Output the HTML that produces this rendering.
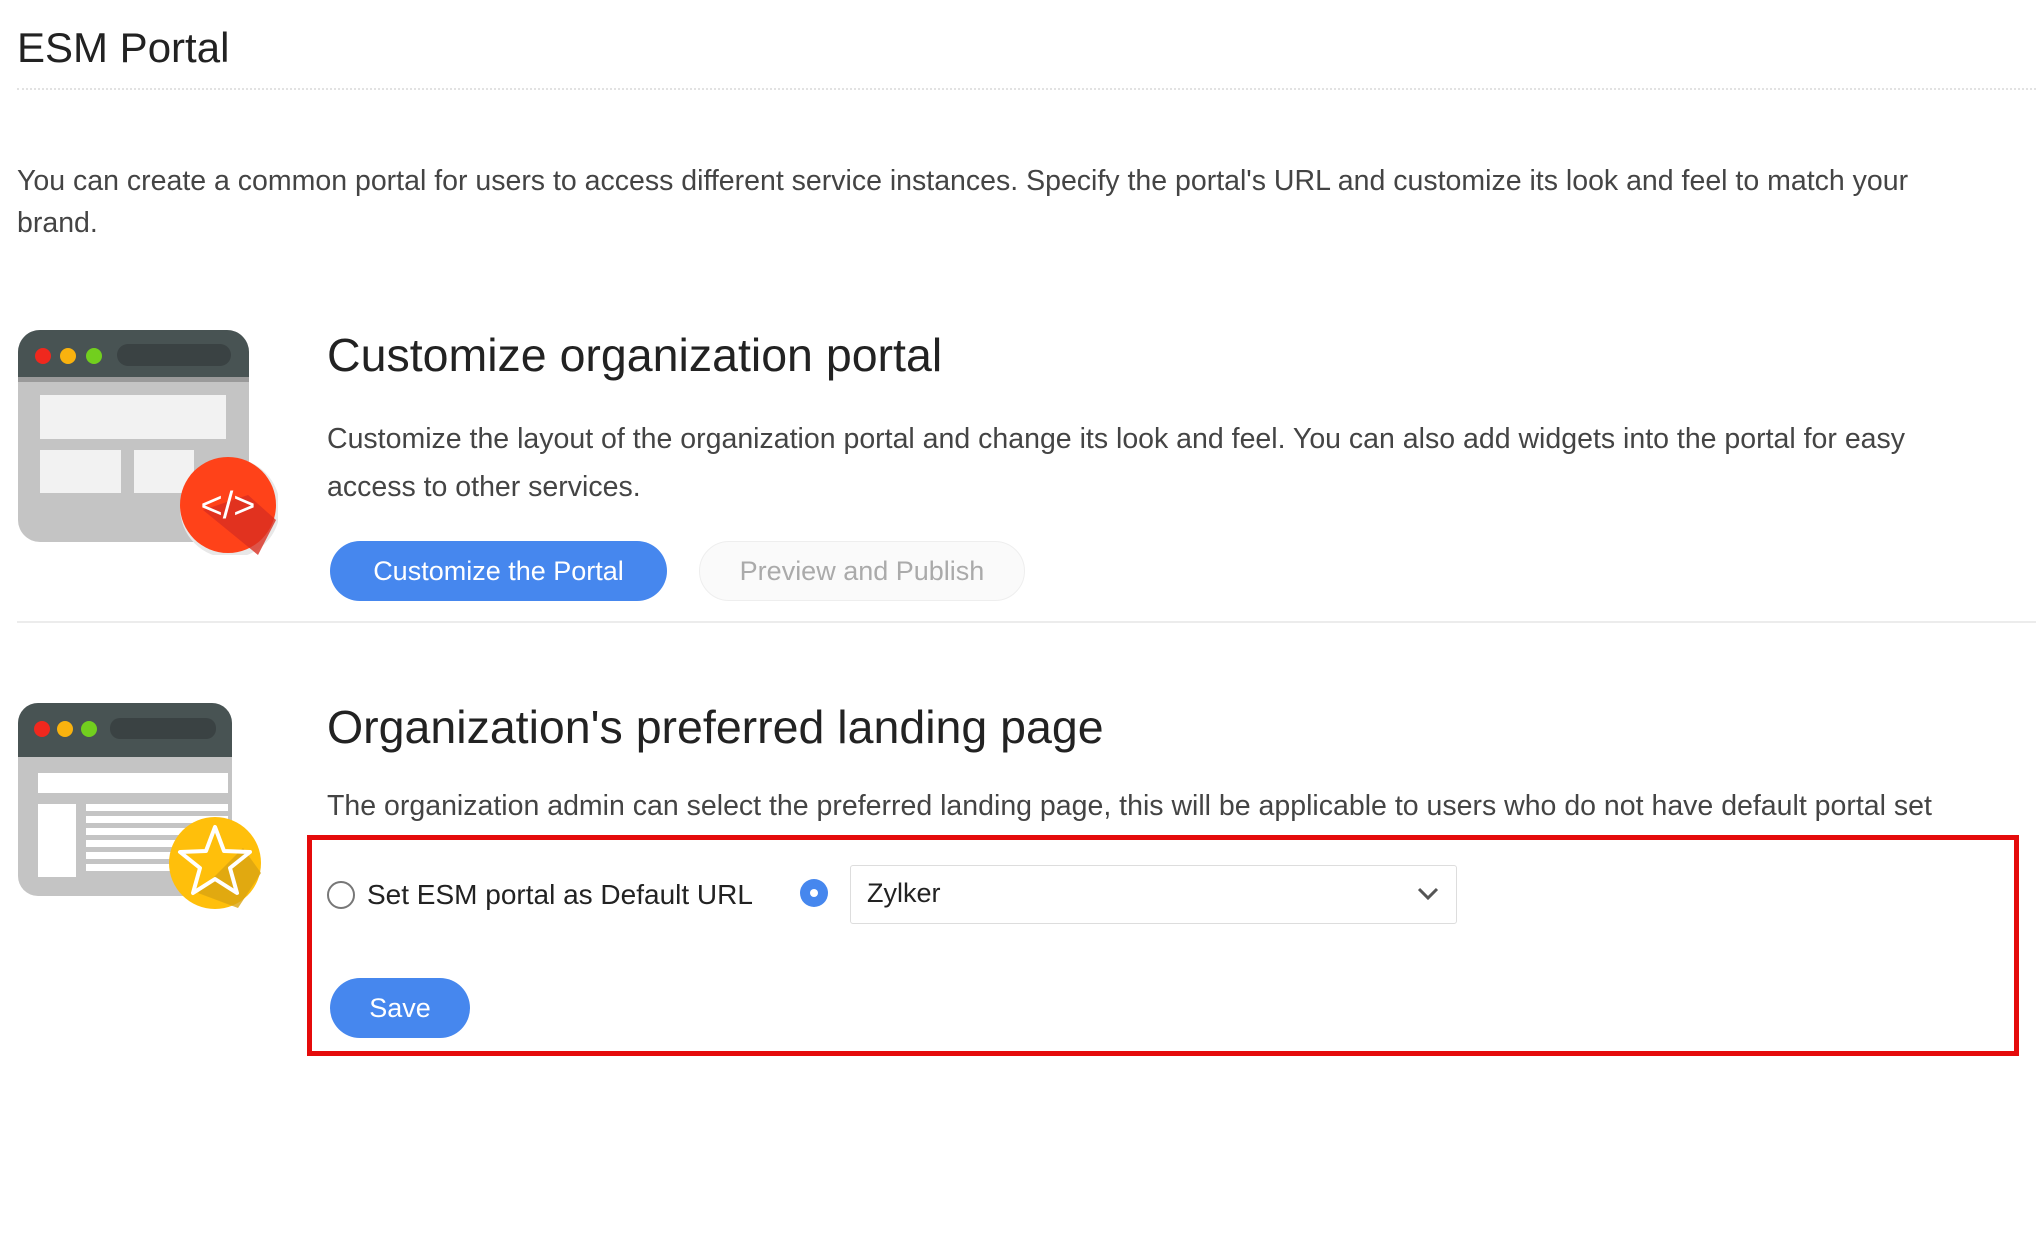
<!DOCTYPE html>
<html><head><meta charset="utf-8"><style>
body{margin:0;width:2040px;height:1244px;background:#fff;font-family:"Liberation Sans",sans-serif;color:#333;position:relative;overflow:hidden}
.a{position:absolute;white-space:nowrap}
.btn{position:absolute;border-radius:30px;font-size:27px;text-align:center}
</style></head><body>
<div class="a" style="left:17px;top:24px;font-size:42px;color:#222">ESM Portal</div>
<div class="a" style="left:17px;top:88px;width:2019px;border-top:2px dotted #e2e2e2"></div>
<div class="a" style="left:17px;top:160px;font-size:28.5px;line-height:42px;color:#444;white-space:normal;width:1950px">You can create a common portal for users to access different service instances. Specify the portal's URL and customize its look and feel to match your brand.</div>

<svg class="a" style="left:18px;top:330px" width="260" height="225" viewBox="0 0 260 225">
<rect x="0" y="0" width="231" height="212" rx="22" fill="#c4c4c4"/>
<path d="M0 22a22 22 0 0 1 22-22h187a22 22 0 0 1 22 22v28h-231z" fill="#485353"/>
<rect x="0" y="47" width="231" height="5" fill="#9a9a9a"/>
<circle cx="25" cy="26" r="8" fill="#f0281e"/><circle cx="50" cy="26" r="8" fill="#f9b20e"/><circle cx="76" cy="26" r="8" fill="#72cf1e"/>
<rect x="99" y="14" width="114" height="22" rx="11" fill="#3a4243"/>
<rect x="22" y="65" width="186" height="44" fill="#f2f2f2"/>
<rect x="22" y="120" width="81" height="43" fill="#f2f2f2"/>
<rect x="116" y="120" width="60" height="43" fill="#f2f2f2"/>
<circle cx="212" cy="178" r="50" fill="#e8e8e8"/>
<circle cx="210" cy="175" r="48" fill="#ff4219"/>
<path d="M185 180 L240 225 L258 190 L230 165z" fill="#d92e20" opacity=".8"/>
<text x="210" y="188" font-size="38" fill="#fff" text-anchor="middle" font-family="Liberation Sans">&lt;/&gt;</text>
</svg>

<div class="a" style="left:327px;top:328px;font-size:46.5px;color:#222">Customize organization portal</div>
<div class="a" style="left:327px;top:415px;font-size:28.5px;line-height:48px;color:#444;white-space:normal;width:1620px">Customize the layout of the organization portal and change its look and feel. You can also add widgets into the portal for easy access to other services.</div>
<div class="btn" style="left:330px;top:541px;width:337px;height:60px;line-height:60px;background:#4687ee;color:#fff">Customize the Portal</div>
<div class="btn" style="left:699px;top:541px;width:324px;height:58px;line-height:58px;border:1px solid #eee;background:#fafafa;color:#aaa">Preview and Publish</div>
<div class="a" style="left:17px;top:621px;width:2019px;border-top:2px solid #ececec"></div>

<svg class="a" style="left:18px;top:703px" width="245" height="210" viewBox="0 0 245 210">
<rect x="0" y="0" width="214" height="193" rx="20" fill="#c4c4c4"/>
<path d="M0 20a20 20 0 0 1 20-20h174a20 20 0 0 1 20 20v34h-214z" fill="#485353"/>
<circle cx="24" cy="26" r="8" fill="#f0281e"/><circle cx="47" cy="26" r="8" fill="#f9b20e"/><circle cx="71" cy="26" r="8" fill="#72cf1e"/>
<rect x="92" y="15" width="106" height="21" rx="10" fill="#3a4243"/>
<rect x="20" y="70" width="190" height="20" fill="#fff"/>
<rect x="20" y="101" width="38" height="73" fill="#fff"/>
<g fill="#fff"><rect x="68" y="101" width="142" height="7"/><rect x="68" y="113" width="142" height="7"/><rect x="68" y="125" width="142" height="7"/><rect x="68" y="137" width="142" height="7"/><rect x="68" y="149" width="142" height="7"/><rect x="68" y="161" width="142" height="7"/></g>
<circle cx="197" cy="160" r="46" fill="#ffbf0b"/>
<path d="M180 190 L220 205 L243 170 L225 145z" fill="#d9a412" opacity=".8"/>
<path d="M197 124 L206 148 L232 149 L212 165 L219 190 L197 176 L175 190 L182 165 L162 149 L188 148z" fill="none" stroke="#fff" stroke-width="4" stroke-linejoin="round"/>
</svg>

<div class="a" style="left:327px;top:700px;font-size:46.5px;color:#222">Organization's preferred landing page</div>
<div class="a" style="left:327px;top:790px;font-size:28.5px;color:#444">The organization admin can select the preferred landing page, this will be applicable to users who do not have default portal set</div>

<div class="a" style="left:307px;top:835px;width:1702px;height:211px;border:5px solid #e50b0b"></div>
<div class="a" style="left:327px;top:881px;width:24px;height:24px;border:2px solid #777;border-radius:50%"></div>
<div class="a" style="left:367px;top:879px;font-size:28px;color:#222">Set ESM portal as Default URL</div>
<div class="a" style="left:800px;top:879px;width:28px;height:28px;background:#4687ee;border-radius:50%"></div>
<div class="a" style="left:810px;top:889px;width:8px;height:8px;background:#fff;border-radius:50%"></div>
<div class="a" style="left:850px;top:865px;width:605px;height:57px;border:1px solid #ddd;border-radius:3px"></div>
<div class="a" style="left:867px;top:878px;font-size:27px;color:#222">Zylker</div>
<svg class="a" style="left:1416px;top:886px" width="24" height="16"><path d="M3 3l9 9 9-9" fill="none" stroke="#555" stroke-width="3"/></svg>
<div class="btn" style="left:330px;top:978px;width:140px;height:60px;line-height:60px;background:#4687ee;color:#fff">Save</div>
</body></html>
